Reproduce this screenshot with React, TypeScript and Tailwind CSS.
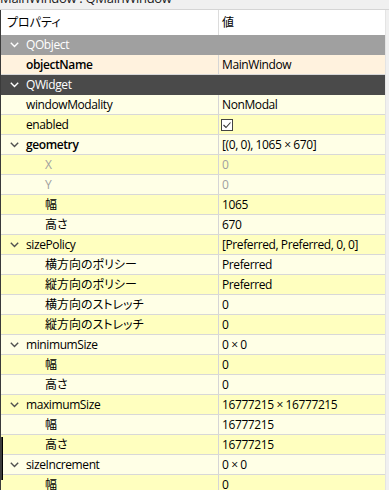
import React from "react";

type Row =
  | { kind: "group"; name: string; dark: boolean }
  | {
      kind: "prop";
      name: string;
      value: string;
      level: 0 | 1;
      expandable?: boolean;
      bold?: boolean;
      disabled?: boolean;
      check?: boolean;
      bg: string;
    };

const PEACH = "bg-[#fff2de]";
const LIGHT = "bg-[#ffffe6]";
const YEL = "bg-[#ffffbf]";

const rows: Row[] = [
  { kind: "group", name: "QObject", dark: false },
  { kind: "prop", name: "objectName", value: "MainWindow", level: 0, bold: true, bg: PEACH },
  { kind: "group", name: "QWidget", dark: true },
  { kind: "prop", name: "windowModality", value: "NonModal", level: 0, bg: LIGHT },
  { kind: "prop", name: "enabled", value: "", check: true, level: 0, bg: YEL },
  { kind: "prop", name: "geometry", value: "[(0, 0), 1065 × 670]", level: 0, expandable: true, bold: true, bg: LIGHT },
  { kind: "prop", name: "X", value: "0", level: 1, disabled: true, bg: YEL },
  { kind: "prop", name: "Y", value: "0", level: 1, disabled: true, bg: LIGHT },
  { kind: "prop", name: "幅", value: "1065", level: 1, bg: YEL },
  { kind: "prop", name: "高さ", value: "670", level: 1, bg: LIGHT },
  { kind: "prop", name: "sizePolicy", value: "[Preferred, Preferred, 0, 0]", level: 0, expandable: true, bg: YEL },
  { kind: "prop", name: "横方向のポリシー", value: "Preferred", level: 1, bg: LIGHT },
  { kind: "prop", name: "縦方向のポリシー", value: "Preferred", level: 1, bg: YEL },
  { kind: "prop", name: "横方向のストレッチ", value: "0", level: 1, bg: LIGHT },
  { kind: "prop", name: "縦方向のストレッチ", value: "0", level: 1, bg: YEL },
  { kind: "prop", name: "minimumSize", value: "0 × 0", level: 0, expandable: true, bg: LIGHT },
  { kind: "prop", name: "幅", value: "0", level: 1, bg: YEL },
  { kind: "prop", name: "高さ", value: "0", level: 1, bg: LIGHT },
  { kind: "prop", name: "maximumSize", value: "16777215 × 16777215", level: 0, expandable: true, bg: YEL },
  { kind: "prop", name: "幅", value: "16777215", level: 1, bg: LIGHT },
  { kind: "prop", name: "高さ", value: "16777215", level: 1, bg: YEL },
  { kind: "prop", name: "sizeIncrement", value: "0 × 0", level: 0, expandable: true, bg: LIGHT },
  { kind: "prop", name: "幅", value: "0", level: 1, bg: YEL },
];

const isJp = (s: string) => /[\u3000-\u9fff]/.test(s);

function Chevron({ color }: { color: string }) {
  return (
    <svg width="9" height="6" viewBox="0 0 9 6" className="shrink-0">
      <polyline points="0.8,0.8 4.5,4.5 8.2,0.8" fill="none" stroke={color} strokeWidth="1.4" />
    </svg>
  );
}

function Txt({ s, className = "" }: { s: string; className?: string }) {
  return (
    <span className={`leading-none whitespace-nowrap ${isJp(s) ? "tracking-normal" : "tracking-[-0.4px]"} ${className}`}>
      {s}
    </span>
  );
}

export default function App() {
  return (
    <div
      className="w-[389px] h-[490px] overflow-hidden bg-[#f0f0f0] text-[12px] text-black relative [font-feature-settings:'palt']"
      style={{ fontFamily: '"Open Sans", "Noto Sans CJK JP", sans-serif' }}
    >
      <div className="h-[10px] overflow-hidden border-b border-[#d5d5d5]">
        <div className="text-[13px] leading-[14px] mt-[-9px] tracking-[-0.3px] text-[#1a1a1a]">MainWindow : QMainWindow</div>
      </div>
      <div className="border-l border-[#3a3a3a] w-[386px] border-r border-r-[#e4e4e4]">
        <div className="flex h-[25px] bg-white">
          <div className="w-[218px] shrink-0 border-r border-[#dcdcdc] flex items-center pl-[6px]">
            <Txt s="プロパティ" />
          </div>
          <div className="flex-1 flex items-center pl-[3px]">
            <Txt s="値" />
          </div>
        </div>
        {rows.map((r, i) =>
          r.kind === "group" ? (
            <div
              key={i}
              className={`flex items-center h-[20px] text-white ${r.dark ? "bg-[#4a4a4a]" : "bg-[#a0a0a0]"}`}
            >
              <div className="w-[25px] flex justify-center pl-[1px]">
                <Chevron color="#ffffff" />
              </div>
              <Txt s={r.name} />
            </div>
          ) : (
            <div key={i} className={`flex h-[20px] border-b border-[#d8d8d8] ${r.bg}`}>
              <div
                className={`w-[218px] shrink-0 border-r border-[#d6d6d6] flex items-center ${
                  r.level === 1 ? "pl-[44px]" : "pl-[0px]"
                }`}
              >
                {r.level === 0 && (
                  <div className="w-[25px] flex justify-center pl-[1px]">
                    {r.expandable && <Chevron color="#505050" />}
                  </div>
                )}
                <Txt
                  s={r.name}
                  className={`${r.bold ? "font-semibold" : ""} ${r.disabled ? "text-[#a0a0a0]" : ""}`}
                />
              </div>
              <div className={`flex-1 flex items-center pl-[3px] ${r.disabled ? "text-[#a0a0a0]" : ""}`}>
                {r.check ? (
                  <div className="w-[12px] h-[12px] border border-[#444444] bg-white flex items-center justify-center ml-[-1px]">
                    <svg width="10" height="10" viewBox="0 0 10 10">
                      <polyline points="1.5,5 4,7.5 8.5,2.5" fill="none" stroke="#333333" strokeWidth="1.1" />
                    </svg>
                  </div>
                ) : (
                  <Txt s={r.value} />
                )}
              </div>
            </div>
          )
        )}
      </div>
      <div className="absolute left-0 top-[437px] w-[3px] h-[43px] bg-[#3c3c3c] border-r border-black" />
    </div>
  );
}
